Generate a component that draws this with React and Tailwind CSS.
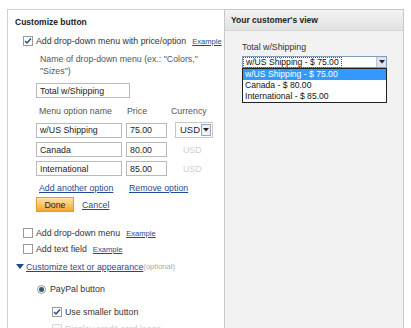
import React from 'react';

const font = { fontFamily: '"Liberation Sans", Arial, sans-serif' };

function Check({ checked, disabled }) {
  return (
    <span
      className={`inline-flex items-center justify-center w-[10px] h-[10px] border ${
        disabled ? 'border-[#dcdcdc] bg-[#f7f7f7]' : 'border-[#9a9a9a] bg-white'
      } shrink-0`}
    >
      {checked && (
        <svg width="8" height="8" viewBox="0 0 8 8">
          <path d="M1 4 L3 6 L7 1.5" fill="none" stroke="#2a4a8a" strokeWidth="1.5" />
        </svg>
      )}
    </span>
  );
}

function Link({ children, small }) {
  return (
    <span className={`text-[#1f4a93] underline ${small ? 'text-[7.6px]' : ''}`}>{children}</span>
  );
}

function Field({ value, w }) {
  return (
    <div className={`${w} h-[15px] border border-[#b9b9b9] bg-white flex items-center px-[3px] text-[#222]`}>
      {value}
    </div>
  );
}

export default function App() {
  const rows = [
    { name: 'w/US Shipping', price: '75.00', select: true },
    { name: 'Canada', price: '80.00' },
    { name: 'International', price: '85.00' },
  ];

  return (
    <div className="w-[411px] h-[328px] overflow-hidden bg-white text-[8.8px] leading-[12px] text-[#333]" style={font}>
      <div className="flex pt-[9px] pl-[7px] h-full">
        {/* Left panel */}
        <div className="w-[217px] border-l border-t border-[#d0d0d0] flex flex-col">
          <div className="mt-[6px] pl-[7px] font-bold text-[8.5px] text-[#222]">Customize button</div>

          <div className="mt-[7px] pl-[15px] flex items-center gap-[3px] h-[12px]">
            <Check checked />
            <span>Add drop-down menu with price/option</span>
            <span className="ml-[3px]"><Link small>Example</Link></span>
          </div>

          <div className="mt-[6px] pl-[32px] pr-[20px] text-[#555]">
            Name of drop-down menu (ex.: "Colors,"
            <br />
            "Sizes")
          </div>

          <div className="mt-[6px] pl-[28px]">
            <Field value="Total w/Shipping" w="w-[94px]" />
          </div>

          <div className="mt-[7px] pl-[28px] flex text-[#555]">
            <span className="w-[90px] pl-[3px]">Menu option name</span>
            <span className="w-[45px] pl-[1px]">Price</span>
            <span>Currency</span>
          </div>

          <div className="mt-[5px] pl-[28px] flex flex-col gap-[4px]">
            {rows.map((r) => (
              <div key={r.name} className="flex items-center">
                <Field value={r.name} w="w-[86px]" />
                <div className="ml-[4px]">
                  <Field value={r.price} w="w-[41px]" />
                </div>
                {r.select ? (
                  <div className="ml-[8px] w-[38px] h-[16px] border border-[#c8c8c8] bg-white flex items-center justify-between pl-[4px] pr-[1px] text-[#222] text-[9.5px]">
                    <span>USD</span>
                    <span className="w-[10px] h-[12px] border border-[#9aa6b8] bg-[#eef0f4] flex items-center justify-center">
                      <svg width="6" height="4" viewBox="0 0 6 4">
                        <path d="M0 0 H6 L3 3.5 Z" fill="#222" />
                      </svg>
                    </span>
                  </div>
                ) : (
                  <span className="ml-[16px] text-[#d0d0d0]">USD</span>
                )}
              </div>
            ))}
          </div>

          <div className="mt-[6px] pl-[31px] flex h-[12px]">
            <span className="w-[90px]"><Link>Add another option</Link></span>
            <Link>Remove option</Link>
          </div>

          <div className="mt-[3px] pl-[28px] flex items-center gap-[8px]">
            <div className="w-[38px] h-[15px] border border-[#e0a030] bg-gradient-to-b from-[#ffe3a6] to-[#f5a623] flex items-center justify-center text-[#222]">
              Done
            </div>
            <Link>Cancel</Link>
          </div>

          <div className="mt-[15px] pl-[15px] flex items-center gap-[3px] h-[12px]">
            <Check />
            <span>Add drop-down menu</span>
            <span className="ml-[3px]"><Link small>Example</Link></span>
          </div>

          <div className="mt-[4px] pl-[15px] flex items-center gap-[3px] h-[12px]">
            <Check />
            <span>Add text field</span>
            <span className="ml-[3px]"><Link small>Example</Link></span>
          </div>

          <div className="mt-[6px] pl-[8px] flex items-center h-[12px]">
            <svg width="8" height="6" viewBox="0 0 8 6" className="mr-[2px]">
              <path d="M0 0 H8 L4 5 Z" fill="#1f4a93" />
            </svg>
            <Link>Customize text or appearance</Link>
            <span className="text-[7.6px] text-[#aaa]">(optional)</span>
          </div>

          <div className="mt-[10px] pl-[29px] flex items-center gap-[4px] h-[12px]">
            <span className="w-[9px] h-[9px] rounded-full border border-[#9a9a9a] bg-white flex items-center justify-center">
              <span className="w-[5px] h-[5px] rounded-full bg-[#2e5a6e]" />
            </span>
            <span>PayPal button</span>
          </div>

          <div className="mt-[11px] pl-[44px] flex items-center gap-[3px] h-[12px]">
            <Check checked />
            <span>Use smaller button</span>
          </div>

          <div className="mt-[5px] pl-[44px] flex items-center gap-[3px] h-[12px] text-[#ccc]">
            <Check disabled />
            <span>Display credit card logos</span>
          </div>
        </div>

        {/* Right panel */}
        <div className="w-[180px] border border-b-0 border-[#c8c8c8] bg-[#f2f2f2] flex flex-col">
          <div className="h-[21px] bg-gradient-to-b from-[#f3f3f3] to-[#e2e2e2] border-b border-[#d6d6d6] flex items-center pl-[6px] font-bold text-[8.5px] text-[#222]">
            Your customer's view
          </div>

          <div className="pl-[17px] mt-[10px] text-[#333]">Total w/Shipping</div>

          <div className="ml-[17px] mt-[3px] w-[145px]">
            <div className="h-[12px] border border-[#7f9db9] bg-white flex items-center justify-between">
              <span className="ml-[1px] px-[2px] leading-[9px] outline outline-1 outline-dotted outline-[#555] text-[8.6px] text-[#111]">
                w/US Shipping - $ 75.00
              </span>
              <span className="w-[10px] h-[10px] bg-[#dde3ee] border-l border-[#b5c3d8] flex items-center justify-center">
                <svg width="6" height="4" viewBox="0 0 6 4">
                  <path d="M0 0 H6 L3 3.5 Z" fill="#222" />
                </svg>
              </span>
            </div>
            <div className="border border-[#222] bg-white text-[8.6px] leading-[11px] text-[#111]">
              <div className="bg-[#3399ff] text-white pl-[2px]">w/US Shipping - $ 75.00</div>
              <div className="pl-[2px]">Canada - $ 80.00</div>
              <div className="pl-[2px]">International - $ 85.00</div>
            </div>
          </div>
        </div>
      </div>
    </div>
  );
}
